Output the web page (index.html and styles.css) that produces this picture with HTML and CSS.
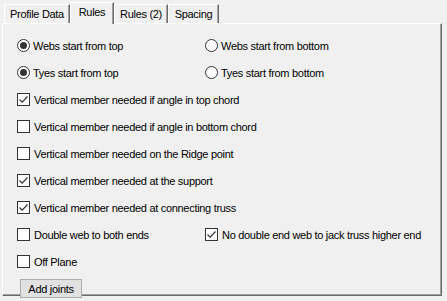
FILE: index.html
```html
<!DOCTYPE html>
<html>
<head>
<meta charset="utf-8">
<link rel="stylesheet" href="styles.css">
</head>
<body>
<div class="tabs">
  <div class="tab w-profile">Profile Data</div>
  <div class="tab tab-active w-rules">Rules</div>
  <div class="tab w-rules2">Rules (2)</div>
  <div class="tab w-spacing">Spacing</div>
</div>
<div class="panel">
  <div class="row">
    <label class="opt"><span class="radio checked"></span>Webs start from top</label>
    <label class="opt"><span class="radio"></span>Webs start from bottom</label>
  </div>
  <div class="row">
    <label class="opt"><span class="radio checked"></span>Tyes start from top</label>
    <label class="opt"><span class="radio"></span>Tyes start from bottom</label>
  </div>
  <div class="row">
    <label class="opt"><span class="check checked"><svg viewBox="0 0 11 11" width="11" height="11"><polyline points="1.5,5.5 4.2,8.2 9.5,2.5" fill="none" stroke="#333" stroke-width="1.2"/></svg></span>Vertical member needed if angle in top chord</label>
  </div>
  <div class="row">
    <label class="opt"><span class="check"></span>Vertical member needed if angle in bottom chord</label>
  </div>
  <div class="row">
    <label class="opt"><span class="check"></span>Vertical member needed on the Ridge point</label>
  </div>
  <div class="row">
    <label class="opt"><span class="check checked"><svg viewBox="0 0 11 11" width="11" height="11"><polyline points="1.5,5.5 4.2,8.2 9.5,2.5" fill="none" stroke="#333" stroke-width="1.2"/></svg></span>Vertical member needed at the support</label>
  </div>
  <div class="row">
    <label class="opt"><span class="check checked"><svg viewBox="0 0 11 11" width="11" height="11"><polyline points="1.5,5.5 4.2,8.2 9.5,2.5" fill="none" stroke="#333" stroke-width="1.2"/></svg></span>Vertical member needed at connecting truss</label>
  </div>
  <div class="row">
    <label class="opt"><span class="check"></span>Double web to both ends</label>
    <label class="opt"><span class="check checked"><svg viewBox="0 0 11 11" width="11" height="11"><polyline points="1.5,5.5 4.2,8.2 9.5,2.5" fill="none" stroke="#333" stroke-width="1.2"/></svg></span>No double end web to jack truss higher end</label>
  </div>
  <div class="row">
    <label class="opt"><span class="check"></span>Off Plane</label>
  </div>
  <div class="btn">Add joints</div>
</div>
</body>
</html>
```
FILE: styles.css
```css
html, body {
  margin: 0;
  padding: 0;
  background: #f0f0f0;
}
body {
  font-family: "Liberation Sans", Arial, sans-serif;
  font-size: 11px;
  letter-spacing: -0.3px;
  color: #000;
  width: 447px;
  height: 301px;
  overflow: hidden;
}
.tabs {
  display: flex;
  align-items: flex-end;
  height: 23px;
  padding-left: 4px;
}
.tab {
  box-sizing: border-box;
  height: 19px;
  border-top: 1px solid #fff;
  border-left: 1px solid #fff;
  border-right: 1px solid #696969;
  box-shadow: inset -1px 0 0 #a0a0a0;
  background: #f0f0f0;
  display: flex;
  justify-content: center;
  align-items: center;
  padding-bottom: 1px;
}
.tab-active {
  height: 22px;
  margin-bottom: -1px;
  position: relative;
  z-index: 1;
  padding-bottom: 3px;
}
.w-profile { width: 66px; }
.w-rules { width: 44px; }
.w-rules2 { width: 54px; }
.w-spacing { width: 51px; }
.panel {
  box-sizing: border-box;
  margin-left: 2px;
  width: 440px;
  height: 273px;
  border-top: 1px solid #fff;
  border-left: 1px solid #fff;
  border-right: 1px solid #696969;
  border-bottom: 1px solid #696969;
  box-shadow: inset -1px -1px 0 #a0a0a0;
  padding: 8px 0 0 14px;
}
.row {
  display: grid;
  grid-template-columns: 188px auto;
  height: 27px;
  align-items: center;
}
.opt {
  display: flex;
  align-items: center;
  gap: 3px;
  white-space: nowrap;
}
.radio {
  box-sizing: border-box;
  width: 13px;
  height: 13px;
  border: 1px solid #333;
  border-radius: 50%;
  background: #fff;
  display: flex;
  align-items: center;
  justify-content: center;
  flex: none;
}
.radio.checked::after {
  content: "";
  width: 7px;
  height: 7px;
  border-radius: 50%;
  background: #333;
}
.check {
  box-sizing: border-box;
  width: 13px;
  height: 13px;
  border: 1px solid #333;
  background: #fff;
  display: flex;
  align-items: center;
  justify-content: center;
  flex: none;
  margin-right: 1px;
}
.check svg {
  display: block;
}
.btn {
  box-sizing: border-box;
  margin-top: 4px;
  width: 62px;
  height: 19px;
  margin-left: 3px;
  background: #e1e1e1;
  border: 1px solid #adadad;
  display: flex;
  align-items: center;
  justify-content: center;
  position: relative;
}
```
